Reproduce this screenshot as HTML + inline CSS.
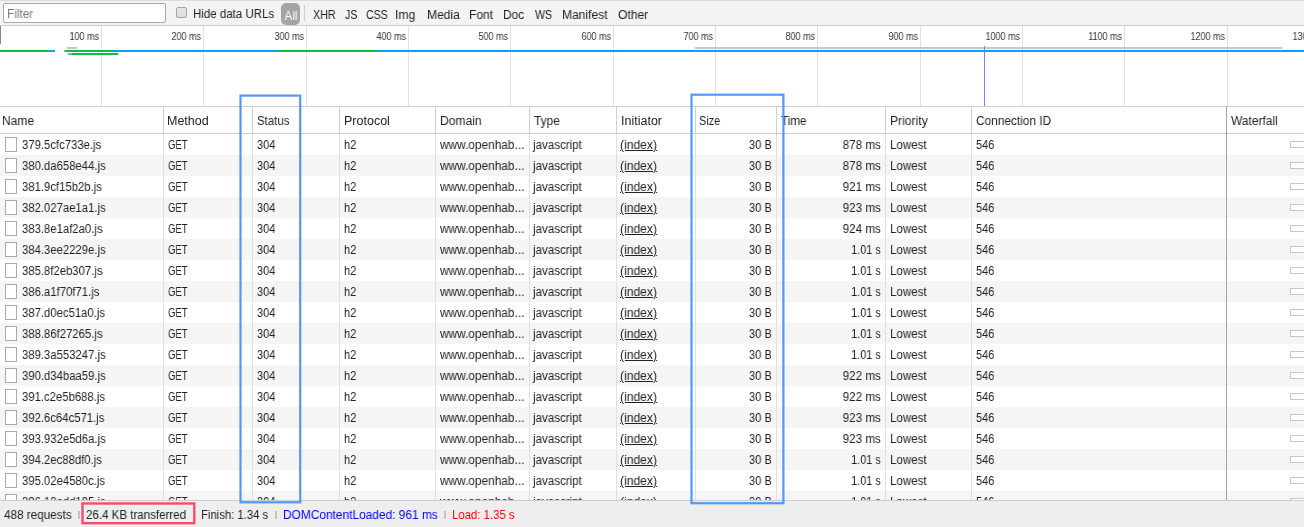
<!DOCTYPE html>
<html><head><meta charset="utf-8"><style>
*{box-sizing:border-box}
html,body{margin:0;padding:0}
body{width:1304px;height:527px;overflow:hidden;position:relative;background:#fff;font-family:"Liberation Sans", sans-serif;font-size:12.5px;color:#222}
.a{position:absolute;white-space:nowrap}
.t{position:absolute;white-space:nowrap;line-height:13px;will-change:transform;transform:scaleX(0.9);transform-origin:0 50%}
.t.r{text-align:right;transform-origin:100% 50%}
.t.c{text-align:center;transform-origin:50% 50%}
.vl{position:absolute;width:1px}
.hl{position:absolute;height:1px}
</style></head><body>

<div class="a" style="left:0;top:0;width:1304px;height:25px;background:#f3f3f3;border-top:1px solid #dcdcdc"></div>
<div class="hl" style="left:0;top:25px;width:1304px;background:#cdcdcd"></div>
<div class="a" style="left:3px;top:3px;width:163px;height:20px;background:#fff;border:1px solid #a9a9a9;border-radius:2px"></div>
<div class="t" style="left:6.7px;top:8px;color:#777;transform:scaleX(0.941)">Filter</div>
<div class="a" style="left:176px;top:7px;width:11px;height:11px;background:linear-gradient(#e6e6e6,#dcdcdc);border:1px solid #a4a4a4;border-radius:2px"></div>
<div class="t" style="left:193.1px;top:8px;color:#222;transform:scaleX(0.92)">Hide data URLs</div>
<div class="a" style="left:281px;top:3px;width:19px;height:22px;background:#a5a5a5;border-radius:5px"></div>
<div class="t c" style="left:280.5px;top:9px;color:#fff;width:20px;font-size:13px">All</div>
<div class="vl" style="left:304px;top:5px;height:16px;background:#d0d0d0"></div>
<div class="t" style="left:312.6px;top:9px;color:#222;transform:scaleX(0.862)">XHR</div>
<div class="t" style="left:345.2px;top:9px;color:#222;transform:scaleX(0.85)">JS</div>
<div class="t" style="left:366.0px;top:9px;color:#222;transform:scaleX(0.85)">CSS</div>
<div class="t" style="left:395.3px;top:9px;color:#222;transform:scaleX(0.97)">Img</div>
<div class="t" style="left:426.6px;top:9px;color:#222;transform:scaleX(0.967)">Media</div>
<div class="t" style="left:469.2px;top:9px;color:#222;transform:scaleX(0.963)">Font</div>
<div class="t" style="left:503.2px;top:9px;color:#222;transform:scaleX(0.948)">Doc</div>
<div class="t" style="left:534.8px;top:9px;color:#222;transform:scaleX(0.85)">WS</div>
<div class="t" style="left:561.9px;top:9px;color:#222;transform:scaleX(0.965)">Manifest</div>
<div class="t" style="left:618.0px;top:9px;color:#222;transform:scaleX(0.968)">Other</div>
<div class="vl" style="left:101px;top:26px;height:80px;background:#e2e2e2"></div>
<div class="t r" style="left:42px;top:30px;width:57px;font-size:10px;color:#333;transform:scaleX(0.9);transform-origin:right center">100 ms</div>
<div class="vl" style="left:203px;top:26px;height:80px;background:#e2e2e2"></div>
<div class="t r" style="left:144px;top:30px;width:57px;font-size:10px;color:#333;transform:scaleX(0.9);transform-origin:right center">200 ms</div>
<div class="vl" style="left:306px;top:26px;height:80px;background:#e2e2e2"></div>
<div class="t r" style="left:247px;top:30px;width:57px;font-size:10px;color:#333;transform:scaleX(0.9);transform-origin:right center">300 ms</div>
<div class="vl" style="left:408px;top:26px;height:80px;background:#e2e2e2"></div>
<div class="t r" style="left:349px;top:30px;width:57px;font-size:10px;color:#333;transform:scaleX(0.9);transform-origin:right center">400 ms</div>
<div class="vl" style="left:510px;top:26px;height:80px;background:#e2e2e2"></div>
<div class="t r" style="left:451px;top:30px;width:57px;font-size:10px;color:#333;transform:scaleX(0.9);transform-origin:right center">500 ms</div>
<div class="vl" style="left:613px;top:26px;height:80px;background:#e2e2e2"></div>
<div class="t r" style="left:554px;top:30px;width:57px;font-size:10px;color:#333;transform:scaleX(0.9);transform-origin:right center">600 ms</div>
<div class="vl" style="left:715px;top:26px;height:80px;background:#e2e2e2"></div>
<div class="t r" style="left:656px;top:30px;width:57px;font-size:10px;color:#333;transform:scaleX(0.9);transform-origin:right center">700 ms</div>
<div class="vl" style="left:817px;top:26px;height:80px;background:#e2e2e2"></div>
<div class="t r" style="left:758px;top:30px;width:57px;font-size:10px;color:#333;transform:scaleX(0.9);transform-origin:right center">800 ms</div>
<div class="vl" style="left:920px;top:26px;height:80px;background:#e2e2e2"></div>
<div class="t r" style="left:861px;top:30px;width:57px;font-size:10px;color:#333;transform:scaleX(0.9);transform-origin:right center">900 ms</div>
<div class="vl" style="left:1022px;top:26px;height:80px;background:#e2e2e2"></div>
<div class="t r" style="left:963px;top:30px;width:57px;font-size:10px;color:#333;transform:scaleX(0.9);transform-origin:right center">1000 ms</div>
<div class="vl" style="left:1124px;top:26px;height:80px;background:#e2e2e2"></div>
<div class="t r" style="left:1065px;top:30px;width:57px;font-size:10px;color:#333;transform:scaleX(0.9);transform-origin:right center">1100 ms</div>
<div class="vl" style="left:1227px;top:26px;height:80px;background:#e2e2e2"></div>
<div class="t r" style="left:1168px;top:30px;width:57px;font-size:10px;color:#333;transform:scaleX(0.9);transform-origin:right center">1200 ms</div>
<div class="vl" style="left:1329px;top:26px;height:80px;background:#e2e2e2"></div>
<div class="t r" style="left:1270px;top:30px;width:57px;font-size:10px;color:#333;transform:scaleX(0.9);transform-origin:right center">1300 ms</div>
<div class="vl" style="left:0;top:26px;height:18px;width:1px;background:#888"></div>
<div class="a" style="left:0px;top:50px;width:48px;height:2px;background:#00c244"></div>
<div class="a" style="left:48px;top:50px;width:7px;height:2px;background:#00a3f5"></div>
<div class="a" style="left:64px;top:50px;width:2px;height:2px;background:#a0a0a0"></div>
<div class="a" style="left:66px;top:50px;width:46px;height:2px;background:#00c244"></div>
<div class="a" style="left:112px;top:50px;width:4px;height:2px;background:#00a3f5"></div>
<div class="a" style="left:116px;top:50px;width:2px;height:2px;background:#00c244"></div>
<div class="a" style="left:118px;top:50px;width:160px;height:2px;background:#00a3f5"></div>
<div class="a" style="left:278px;top:50px;width:100px;height:2px;background:#00c244"></div>
<div class="a" style="left:378px;top:50px;width:926px;height:2px;background:#00a3f5"></div>
<div class="a" style="left:67px;top:47px;width:10px;height:2px;background:#c8c8c8"></div>
<div class="a" style="left:695px;top:47px;width:587px;height:2px;background:#c8c8c8"></div>
<div class="a" style="left:68px;top:53px;width:4px;height:2px;background:#a0a0a0"></div>
<div class="a" style="left:72px;top:53px;width:45px;height:2px;background:#00c244"></div>
<div class="a" style="left:117px;top:53px;width:1px;height:2px;background:#00a3f5"></div>
<div class="vl" style="left:984px;top:46px;height:60px;background:#7d7dff"></div>
<div class="hl" style="left:0;top:106px;width:1304px;background:#cdcdcd"></div>
<div class="hl" style="left:0;top:133px;width:1304px;background:#cdcdcd"></div>
<div class="t" style="left:2.3px;top:115px;transform:scaleX(0.959)">Name</div>
<div class="t" style="left:167.4px;top:115px;transform:scaleX(1.0)">Method</div>
<div class="t" style="left:256.5px;top:115px;transform:scaleX(0.915)">Status</div>
<div class="t" style="left:343.6px;top:115px;transform:scaleX(0.99)">Protocol</div>
<div class="t" style="left:439.5px;top:115px;transform:scaleX(0.967)">Domain</div>
<div class="t" style="left:533.9px;top:115px;transform:scaleX(0.95)">Type</div>
<div class="t" style="left:620.5px;top:115px;transform:scaleX(1.0)">Initiator</div>
<div class="t" style="left:699.3px;top:115px;transform:scaleX(0.878)">Size</div>
<div class="t" style="left:781.0px;top:115px;transform:scaleX(0.937)">Time</div>
<div class="t" style="left:889.6px;top:115px;transform:scaleX(0.968)">Priority</div>
<div class="t" style="left:976.4px;top:115px;transform:scaleX(0.949)">Connection ID</div>
<div class="t" style="left:1231.3px;top:115px;transform:scaleX(0.96)">Waterfall</div>
<div class="a" style="left:0;top:134px;width:1304px;height:21px;background:#fff"></div>
<div class="a" style="left:0;top:155px;width:1304px;height:21px;background:#f5f5f5"></div>
<div class="a" style="left:0;top:176px;width:1304px;height:21px;background:#fff"></div>
<div class="a" style="left:0;top:197px;width:1304px;height:21px;background:#f5f5f5"></div>
<div class="a" style="left:0;top:218px;width:1304px;height:21px;background:#fff"></div>
<div class="a" style="left:0;top:239px;width:1304px;height:21px;background:#f5f5f5"></div>
<div class="a" style="left:0;top:260px;width:1304px;height:21px;background:#fff"></div>
<div class="a" style="left:0;top:281px;width:1304px;height:21px;background:#f5f5f5"></div>
<div class="a" style="left:0;top:302px;width:1304px;height:21px;background:#fff"></div>
<div class="a" style="left:0;top:323px;width:1304px;height:21px;background:#f5f5f5"></div>
<div class="a" style="left:0;top:344px;width:1304px;height:21px;background:#fff"></div>
<div class="a" style="left:0;top:365px;width:1304px;height:21px;background:#f5f5f5"></div>
<div class="a" style="left:0;top:386px;width:1304px;height:21px;background:#fff"></div>
<div class="a" style="left:0;top:407px;width:1304px;height:21px;background:#f5f5f5"></div>
<div class="a" style="left:0;top:428px;width:1304px;height:21px;background:#fff"></div>
<div class="a" style="left:0;top:449px;width:1304px;height:21px;background:#f5f5f5"></div>
<div class="a" style="left:0;top:470px;width:1304px;height:21px;background:#fff"></div>
<div class="a" style="left:0;top:491px;width:1304px;height:21px;background:#f5f5f5"></div>
<div class="vl" style="left:163px;top:107px;height:26px;background:#d0d0d0"></div>
<div class="vl" style="left:163px;top:134px;height:366px;background:#e1e1e1"></div>
<div class="vl" style="left:252px;top:107px;height:26px;background:#d0d0d0"></div>
<div class="vl" style="left:252px;top:134px;height:366px;background:#e1e1e1"></div>
<div class="vl" style="left:339px;top:107px;height:26px;background:#d0d0d0"></div>
<div class="vl" style="left:339px;top:134px;height:366px;background:#e1e1e1"></div>
<div class="vl" style="left:435px;top:107px;height:26px;background:#d0d0d0"></div>
<div class="vl" style="left:435px;top:134px;height:366px;background:#e1e1e1"></div>
<div class="vl" style="left:529px;top:107px;height:26px;background:#d0d0d0"></div>
<div class="vl" style="left:529px;top:134px;height:366px;background:#e1e1e1"></div>
<div class="vl" style="left:616px;top:107px;height:26px;background:#d0d0d0"></div>
<div class="vl" style="left:616px;top:134px;height:366px;background:#e1e1e1"></div>
<div class="vl" style="left:695px;top:107px;height:26px;background:#d0d0d0"></div>
<div class="vl" style="left:695px;top:134px;height:366px;background:#e1e1e1"></div>
<div class="vl" style="left:776px;top:107px;height:26px;background:#d0d0d0"></div>
<div class="vl" style="left:776px;top:134px;height:366px;background:#e1e1e1"></div>
<div class="vl" style="left:885px;top:107px;height:26px;background:#d0d0d0"></div>
<div class="vl" style="left:885px;top:134px;height:366px;background:#e1e1e1"></div>
<div class="vl" style="left:971px;top:107px;height:26px;background:#d0d0d0"></div>
<div class="vl" style="left:971px;top:134px;height:366px;background:#e1e1e1"></div>
<div class="vl" style="left:1226px;top:107px;height:393px;background:#a3a3a3"></div>
<div class="a" style="left:5px;top:137px;width:12px;height:15px;border:1px solid #aaaaaa;background:#fff"></div>
<div class="t" style="left:22.3px;top:139px;transform:scaleX(0.905)">379.5cfc733e.js</div>
<div class="t" style="left:168.2px;top:139px;transform:scaleX(0.76)">GET</div>
<div class="t" style="left:257.2px;top:139px;transform:scaleX(0.876)">304</div>
<div class="t" style="left:343.9px;top:139px;transform:scaleX(0.885)">h2</div>
<div class="t" style="left:440.3px;top:139px;transform:scaleX(0.949)">www.openhab...</div>
<div class="t" style="left:533.3px;top:139px;transform:scaleX(0.926)">javascript</div>
<div class="t" style="left:620.1px;top:139px;text-decoration:underline;transform:scaleX(0.968)">(index)</div>
<div class="t r" style="left:700px;top:139px;width:71.8px;transform:scaleX(0.885)">30 B</div>
<div class="t r" style="left:790px;top:139px;width:90.8px;transform:scaleX(0.93)">878 ms</div>
<div class="t" style="left:889.7px;top:139px;transform:scaleX(0.923)">Lowest</div>
<div class="t" style="left:976.3px;top:139px;transform:scaleX(0.876)">546</div>
<div class="a" style="left:1290px;top:141px;width:20px;height:7px;border:1px solid #c8c8c8;background:#fff"></div>
<div class="a" style="left:5px;top:158px;width:12px;height:15px;border:1px solid #aaaaaa;background:#fff"></div>
<div class="t" style="left:22.3px;top:160px;transform:scaleX(0.905)">380.da658e44.js</div>
<div class="t" style="left:168.2px;top:160px;transform:scaleX(0.76)">GET</div>
<div class="t" style="left:257.2px;top:160px;transform:scaleX(0.876)">304</div>
<div class="t" style="left:343.9px;top:160px;transform:scaleX(0.885)">h2</div>
<div class="t" style="left:440.3px;top:160px;transform:scaleX(0.949)">www.openhab...</div>
<div class="t" style="left:533.3px;top:160px;transform:scaleX(0.926)">javascript</div>
<div class="t" style="left:620.1px;top:160px;text-decoration:underline;transform:scaleX(0.968)">(index)</div>
<div class="t r" style="left:700px;top:160px;width:71.8px;transform:scaleX(0.885)">30 B</div>
<div class="t r" style="left:790px;top:160px;width:90.8px;transform:scaleX(0.93)">878 ms</div>
<div class="t" style="left:889.7px;top:160px;transform:scaleX(0.923)">Lowest</div>
<div class="t" style="left:976.3px;top:160px;transform:scaleX(0.876)">546</div>
<div class="a" style="left:1290px;top:162px;width:20px;height:7px;border:1px solid #c8c8c8;background:#fff"></div>
<div class="a" style="left:5px;top:179px;width:12px;height:15px;border:1px solid #aaaaaa;background:#fff"></div>
<div class="t" style="left:22.3px;top:181px;transform:scaleX(0.905)">381.9cf15b2b.js</div>
<div class="t" style="left:168.2px;top:181px;transform:scaleX(0.76)">GET</div>
<div class="t" style="left:257.2px;top:181px;transform:scaleX(0.876)">304</div>
<div class="t" style="left:343.9px;top:181px;transform:scaleX(0.885)">h2</div>
<div class="t" style="left:440.3px;top:181px;transform:scaleX(0.949)">www.openhab...</div>
<div class="t" style="left:533.3px;top:181px;transform:scaleX(0.926)">javascript</div>
<div class="t" style="left:620.1px;top:181px;text-decoration:underline;transform:scaleX(0.968)">(index)</div>
<div class="t r" style="left:700px;top:181px;width:71.8px;transform:scaleX(0.885)">30 B</div>
<div class="t r" style="left:790px;top:181px;width:90.8px;transform:scaleX(0.93)">921 ms</div>
<div class="t" style="left:889.7px;top:181px;transform:scaleX(0.923)">Lowest</div>
<div class="t" style="left:976.3px;top:181px;transform:scaleX(0.876)">546</div>
<div class="a" style="left:1290px;top:183px;width:20px;height:7px;border:1px solid #c8c8c8;background:#fff"></div>
<div class="a" style="left:5px;top:200px;width:12px;height:15px;border:1px solid #aaaaaa;background:#fff"></div>
<div class="t" style="left:22.3px;top:202px;transform:scaleX(0.905)">382.027ae1a1.js</div>
<div class="t" style="left:168.2px;top:202px;transform:scaleX(0.76)">GET</div>
<div class="t" style="left:257.2px;top:202px;transform:scaleX(0.876)">304</div>
<div class="t" style="left:343.9px;top:202px;transform:scaleX(0.885)">h2</div>
<div class="t" style="left:440.3px;top:202px;transform:scaleX(0.949)">www.openhab...</div>
<div class="t" style="left:533.3px;top:202px;transform:scaleX(0.926)">javascript</div>
<div class="t" style="left:620.1px;top:202px;text-decoration:underline;transform:scaleX(0.968)">(index)</div>
<div class="t r" style="left:700px;top:202px;width:71.8px;transform:scaleX(0.885)">30 B</div>
<div class="t r" style="left:790px;top:202px;width:90.8px;transform:scaleX(0.93)">923 ms</div>
<div class="t" style="left:889.7px;top:202px;transform:scaleX(0.923)">Lowest</div>
<div class="t" style="left:976.3px;top:202px;transform:scaleX(0.876)">546</div>
<div class="a" style="left:1290px;top:204px;width:20px;height:7px;border:1px solid #c8c8c8;background:#fff"></div>
<div class="a" style="left:5px;top:221px;width:12px;height:15px;border:1px solid #aaaaaa;background:#fff"></div>
<div class="t" style="left:22.3px;top:223px;transform:scaleX(0.905)">383.8e1af2a0.js</div>
<div class="t" style="left:168.2px;top:223px;transform:scaleX(0.76)">GET</div>
<div class="t" style="left:257.2px;top:223px;transform:scaleX(0.876)">304</div>
<div class="t" style="left:343.9px;top:223px;transform:scaleX(0.885)">h2</div>
<div class="t" style="left:440.3px;top:223px;transform:scaleX(0.949)">www.openhab...</div>
<div class="t" style="left:533.3px;top:223px;transform:scaleX(0.926)">javascript</div>
<div class="t" style="left:620.1px;top:223px;text-decoration:underline;transform:scaleX(0.968)">(index)</div>
<div class="t r" style="left:700px;top:223px;width:71.8px;transform:scaleX(0.885)">30 B</div>
<div class="t r" style="left:790px;top:223px;width:90.8px;transform:scaleX(0.93)">924 ms</div>
<div class="t" style="left:889.7px;top:223px;transform:scaleX(0.923)">Lowest</div>
<div class="t" style="left:976.3px;top:223px;transform:scaleX(0.876)">546</div>
<div class="a" style="left:1290px;top:225px;width:20px;height:7px;border:1px solid #c8c8c8;background:#fff"></div>
<div class="a" style="left:5px;top:242px;width:12px;height:15px;border:1px solid #aaaaaa;background:#fff"></div>
<div class="t" style="left:22.3px;top:244px;transform:scaleX(0.905)">384.3ee2229e.js</div>
<div class="t" style="left:168.2px;top:244px;transform:scaleX(0.76)">GET</div>
<div class="t" style="left:257.2px;top:244px;transform:scaleX(0.876)">304</div>
<div class="t" style="left:343.9px;top:244px;transform:scaleX(0.885)">h2</div>
<div class="t" style="left:440.3px;top:244px;transform:scaleX(0.949)">www.openhab...</div>
<div class="t" style="left:533.3px;top:244px;transform:scaleX(0.926)">javascript</div>
<div class="t" style="left:620.1px;top:244px;text-decoration:underline;transform:scaleX(0.968)">(index)</div>
<div class="t r" style="left:700px;top:244px;width:71.8px;transform:scaleX(0.885)">30 B</div>
<div class="t r" style="left:790px;top:244px;width:90.8px;transform:scaleX(0.87)">1.01 s</div>
<div class="t" style="left:889.7px;top:244px;transform:scaleX(0.923)">Lowest</div>
<div class="t" style="left:976.3px;top:244px;transform:scaleX(0.876)">546</div>
<div class="a" style="left:1290px;top:246px;width:20px;height:7px;border:1px solid #c8c8c8;background:#fff"></div>
<div class="a" style="left:5px;top:263px;width:12px;height:15px;border:1px solid #aaaaaa;background:#fff"></div>
<div class="t" style="left:22.3px;top:265px;transform:scaleX(0.905)">385.8f2eb307.js</div>
<div class="t" style="left:168.2px;top:265px;transform:scaleX(0.76)">GET</div>
<div class="t" style="left:257.2px;top:265px;transform:scaleX(0.876)">304</div>
<div class="t" style="left:343.9px;top:265px;transform:scaleX(0.885)">h2</div>
<div class="t" style="left:440.3px;top:265px;transform:scaleX(0.949)">www.openhab...</div>
<div class="t" style="left:533.3px;top:265px;transform:scaleX(0.926)">javascript</div>
<div class="t" style="left:620.1px;top:265px;text-decoration:underline;transform:scaleX(0.968)">(index)</div>
<div class="t r" style="left:700px;top:265px;width:71.8px;transform:scaleX(0.885)">30 B</div>
<div class="t r" style="left:790px;top:265px;width:90.8px;transform:scaleX(0.87)">1.01 s</div>
<div class="t" style="left:889.7px;top:265px;transform:scaleX(0.923)">Lowest</div>
<div class="t" style="left:976.3px;top:265px;transform:scaleX(0.876)">546</div>
<div class="a" style="left:1290px;top:267px;width:20px;height:7px;border:1px solid #c8c8c8;background:#fff"></div>
<div class="a" style="left:5px;top:284px;width:12px;height:15px;border:1px solid #aaaaaa;background:#fff"></div>
<div class="t" style="left:22.3px;top:286px;transform:scaleX(0.905)">386.a1f70f71.js</div>
<div class="t" style="left:168.2px;top:286px;transform:scaleX(0.76)">GET</div>
<div class="t" style="left:257.2px;top:286px;transform:scaleX(0.876)">304</div>
<div class="t" style="left:343.9px;top:286px;transform:scaleX(0.885)">h2</div>
<div class="t" style="left:440.3px;top:286px;transform:scaleX(0.949)">www.openhab...</div>
<div class="t" style="left:533.3px;top:286px;transform:scaleX(0.926)">javascript</div>
<div class="t" style="left:620.1px;top:286px;text-decoration:underline;transform:scaleX(0.968)">(index)</div>
<div class="t r" style="left:700px;top:286px;width:71.8px;transform:scaleX(0.885)">30 B</div>
<div class="t r" style="left:790px;top:286px;width:90.8px;transform:scaleX(0.87)">1.01 s</div>
<div class="t" style="left:889.7px;top:286px;transform:scaleX(0.923)">Lowest</div>
<div class="t" style="left:976.3px;top:286px;transform:scaleX(0.876)">546</div>
<div class="a" style="left:1290px;top:288px;width:20px;height:7px;border:1px solid #c8c8c8;background:#fff"></div>
<div class="a" style="left:5px;top:305px;width:12px;height:15px;border:1px solid #aaaaaa;background:#fff"></div>
<div class="t" style="left:22.3px;top:307px;transform:scaleX(0.905)">387.d0ec51a0.js</div>
<div class="t" style="left:168.2px;top:307px;transform:scaleX(0.76)">GET</div>
<div class="t" style="left:257.2px;top:307px;transform:scaleX(0.876)">304</div>
<div class="t" style="left:343.9px;top:307px;transform:scaleX(0.885)">h2</div>
<div class="t" style="left:440.3px;top:307px;transform:scaleX(0.949)">www.openhab...</div>
<div class="t" style="left:533.3px;top:307px;transform:scaleX(0.926)">javascript</div>
<div class="t" style="left:620.1px;top:307px;text-decoration:underline;transform:scaleX(0.968)">(index)</div>
<div class="t r" style="left:700px;top:307px;width:71.8px;transform:scaleX(0.885)">30 B</div>
<div class="t r" style="left:790px;top:307px;width:90.8px;transform:scaleX(0.87)">1.01 s</div>
<div class="t" style="left:889.7px;top:307px;transform:scaleX(0.923)">Lowest</div>
<div class="t" style="left:976.3px;top:307px;transform:scaleX(0.876)">546</div>
<div class="a" style="left:1290px;top:309px;width:20px;height:7px;border:1px solid #c8c8c8;background:#fff"></div>
<div class="a" style="left:5px;top:326px;width:12px;height:15px;border:1px solid #aaaaaa;background:#fff"></div>
<div class="t" style="left:22.3px;top:328px;transform:scaleX(0.905)">388.86f27265.js</div>
<div class="t" style="left:168.2px;top:328px;transform:scaleX(0.76)">GET</div>
<div class="t" style="left:257.2px;top:328px;transform:scaleX(0.876)">304</div>
<div class="t" style="left:343.9px;top:328px;transform:scaleX(0.885)">h2</div>
<div class="t" style="left:440.3px;top:328px;transform:scaleX(0.949)">www.openhab...</div>
<div class="t" style="left:533.3px;top:328px;transform:scaleX(0.926)">javascript</div>
<div class="t" style="left:620.1px;top:328px;text-decoration:underline;transform:scaleX(0.968)">(index)</div>
<div class="t r" style="left:700px;top:328px;width:71.8px;transform:scaleX(0.885)">30 B</div>
<div class="t r" style="left:790px;top:328px;width:90.8px;transform:scaleX(0.87)">1.01 s</div>
<div class="t" style="left:889.7px;top:328px;transform:scaleX(0.923)">Lowest</div>
<div class="t" style="left:976.3px;top:328px;transform:scaleX(0.876)">546</div>
<div class="a" style="left:1290px;top:330px;width:20px;height:7px;border:1px solid #c8c8c8;background:#fff"></div>
<div class="a" style="left:5px;top:347px;width:12px;height:15px;border:1px solid #aaaaaa;background:#fff"></div>
<div class="t" style="left:22.3px;top:349px;transform:scaleX(0.905)">389.3a553247.js</div>
<div class="t" style="left:168.2px;top:349px;transform:scaleX(0.76)">GET</div>
<div class="t" style="left:257.2px;top:349px;transform:scaleX(0.876)">304</div>
<div class="t" style="left:343.9px;top:349px;transform:scaleX(0.885)">h2</div>
<div class="t" style="left:440.3px;top:349px;transform:scaleX(0.949)">www.openhab...</div>
<div class="t" style="left:533.3px;top:349px;transform:scaleX(0.926)">javascript</div>
<div class="t" style="left:620.1px;top:349px;text-decoration:underline;transform:scaleX(0.968)">(index)</div>
<div class="t r" style="left:700px;top:349px;width:71.8px;transform:scaleX(0.885)">30 B</div>
<div class="t r" style="left:790px;top:349px;width:90.8px;transform:scaleX(0.87)">1.01 s</div>
<div class="t" style="left:889.7px;top:349px;transform:scaleX(0.923)">Lowest</div>
<div class="t" style="left:976.3px;top:349px;transform:scaleX(0.876)">546</div>
<div class="a" style="left:1290px;top:351px;width:20px;height:7px;border:1px solid #c8c8c8;background:#fff"></div>
<div class="a" style="left:5px;top:368px;width:12px;height:15px;border:1px solid #aaaaaa;background:#fff"></div>
<div class="t" style="left:22.3px;top:370px;transform:scaleX(0.905)">390.d34baa59.js</div>
<div class="t" style="left:168.2px;top:370px;transform:scaleX(0.76)">GET</div>
<div class="t" style="left:257.2px;top:370px;transform:scaleX(0.876)">304</div>
<div class="t" style="left:343.9px;top:370px;transform:scaleX(0.885)">h2</div>
<div class="t" style="left:440.3px;top:370px;transform:scaleX(0.949)">www.openhab...</div>
<div class="t" style="left:533.3px;top:370px;transform:scaleX(0.926)">javascript</div>
<div class="t" style="left:620.1px;top:370px;text-decoration:underline;transform:scaleX(0.968)">(index)</div>
<div class="t r" style="left:700px;top:370px;width:71.8px;transform:scaleX(0.885)">30 B</div>
<div class="t r" style="left:790px;top:370px;width:90.8px;transform:scaleX(0.93)">922 ms</div>
<div class="t" style="left:889.7px;top:370px;transform:scaleX(0.923)">Lowest</div>
<div class="t" style="left:976.3px;top:370px;transform:scaleX(0.876)">546</div>
<div class="a" style="left:1290px;top:372px;width:20px;height:7px;border:1px solid #c8c8c8;background:#fff"></div>
<div class="a" style="left:5px;top:389px;width:12px;height:15px;border:1px solid #aaaaaa;background:#fff"></div>
<div class="t" style="left:22.3px;top:391px;transform:scaleX(0.905)">391.c2e5b688.js</div>
<div class="t" style="left:168.2px;top:391px;transform:scaleX(0.76)">GET</div>
<div class="t" style="left:257.2px;top:391px;transform:scaleX(0.876)">304</div>
<div class="t" style="left:343.9px;top:391px;transform:scaleX(0.885)">h2</div>
<div class="t" style="left:440.3px;top:391px;transform:scaleX(0.949)">www.openhab...</div>
<div class="t" style="left:533.3px;top:391px;transform:scaleX(0.926)">javascript</div>
<div class="t" style="left:620.1px;top:391px;text-decoration:underline;transform:scaleX(0.968)">(index)</div>
<div class="t r" style="left:700px;top:391px;width:71.8px;transform:scaleX(0.885)">30 B</div>
<div class="t r" style="left:790px;top:391px;width:90.8px;transform:scaleX(0.93)">922 ms</div>
<div class="t" style="left:889.7px;top:391px;transform:scaleX(0.923)">Lowest</div>
<div class="t" style="left:976.3px;top:391px;transform:scaleX(0.876)">546</div>
<div class="a" style="left:1290px;top:393px;width:20px;height:7px;border:1px solid #c8c8c8;background:#fff"></div>
<div class="a" style="left:5px;top:410px;width:12px;height:15px;border:1px solid #aaaaaa;background:#fff"></div>
<div class="t" style="left:22.3px;top:412px;transform:scaleX(0.905)">392.6c64c571.js</div>
<div class="t" style="left:168.2px;top:412px;transform:scaleX(0.76)">GET</div>
<div class="t" style="left:257.2px;top:412px;transform:scaleX(0.876)">304</div>
<div class="t" style="left:343.9px;top:412px;transform:scaleX(0.885)">h2</div>
<div class="t" style="left:440.3px;top:412px;transform:scaleX(0.949)">www.openhab...</div>
<div class="t" style="left:533.3px;top:412px;transform:scaleX(0.926)">javascript</div>
<div class="t" style="left:620.1px;top:412px;text-decoration:underline;transform:scaleX(0.968)">(index)</div>
<div class="t r" style="left:700px;top:412px;width:71.8px;transform:scaleX(0.885)">30 B</div>
<div class="t r" style="left:790px;top:412px;width:90.8px;transform:scaleX(0.93)">923 ms</div>
<div class="t" style="left:889.7px;top:412px;transform:scaleX(0.923)">Lowest</div>
<div class="t" style="left:976.3px;top:412px;transform:scaleX(0.876)">546</div>
<div class="a" style="left:1290px;top:414px;width:20px;height:7px;border:1px solid #c8c8c8;background:#fff"></div>
<div class="a" style="left:5px;top:431px;width:12px;height:15px;border:1px solid #aaaaaa;background:#fff"></div>
<div class="t" style="left:22.3px;top:433px;transform:scaleX(0.905)">393.932e5d6a.js</div>
<div class="t" style="left:168.2px;top:433px;transform:scaleX(0.76)">GET</div>
<div class="t" style="left:257.2px;top:433px;transform:scaleX(0.876)">304</div>
<div class="t" style="left:343.9px;top:433px;transform:scaleX(0.885)">h2</div>
<div class="t" style="left:440.3px;top:433px;transform:scaleX(0.949)">www.openhab...</div>
<div class="t" style="left:533.3px;top:433px;transform:scaleX(0.926)">javascript</div>
<div class="t" style="left:620.1px;top:433px;text-decoration:underline;transform:scaleX(0.968)">(index)</div>
<div class="t r" style="left:700px;top:433px;width:71.8px;transform:scaleX(0.885)">30 B</div>
<div class="t r" style="left:790px;top:433px;width:90.8px;transform:scaleX(0.93)">923 ms</div>
<div class="t" style="left:889.7px;top:433px;transform:scaleX(0.923)">Lowest</div>
<div class="t" style="left:976.3px;top:433px;transform:scaleX(0.876)">546</div>
<div class="a" style="left:1290px;top:435px;width:20px;height:7px;border:1px solid #c8c8c8;background:#fff"></div>
<div class="a" style="left:5px;top:452px;width:12px;height:15px;border:1px solid #aaaaaa;background:#fff"></div>
<div class="t" style="left:22.3px;top:454px;transform:scaleX(0.905)">394.2ec88df0.js</div>
<div class="t" style="left:168.2px;top:454px;transform:scaleX(0.76)">GET</div>
<div class="t" style="left:257.2px;top:454px;transform:scaleX(0.876)">304</div>
<div class="t" style="left:343.9px;top:454px;transform:scaleX(0.885)">h2</div>
<div class="t" style="left:440.3px;top:454px;transform:scaleX(0.949)">www.openhab...</div>
<div class="t" style="left:533.3px;top:454px;transform:scaleX(0.926)">javascript</div>
<div class="t" style="left:620.1px;top:454px;text-decoration:underline;transform:scaleX(0.968)">(index)</div>
<div class="t r" style="left:700px;top:454px;width:71.8px;transform:scaleX(0.885)">30 B</div>
<div class="t r" style="left:790px;top:454px;width:90.8px;transform:scaleX(0.87)">1.01 s</div>
<div class="t" style="left:889.7px;top:454px;transform:scaleX(0.923)">Lowest</div>
<div class="t" style="left:976.3px;top:454px;transform:scaleX(0.876)">546</div>
<div class="a" style="left:1290px;top:456px;width:20px;height:7px;border:1px solid #c8c8c8;background:#fff"></div>
<div class="a" style="left:5px;top:473px;width:12px;height:15px;border:1px solid #aaaaaa;background:#fff"></div>
<div class="t" style="left:22.3px;top:475px;transform:scaleX(0.905)">395.02e4580c.js</div>
<div class="t" style="left:168.2px;top:475px;transform:scaleX(0.76)">GET</div>
<div class="t" style="left:257.2px;top:475px;transform:scaleX(0.876)">304</div>
<div class="t" style="left:343.9px;top:475px;transform:scaleX(0.885)">h2</div>
<div class="t" style="left:440.3px;top:475px;transform:scaleX(0.949)">www.openhab...</div>
<div class="t" style="left:533.3px;top:475px;transform:scaleX(0.926)">javascript</div>
<div class="t" style="left:620.1px;top:475px;text-decoration:underline;transform:scaleX(0.968)">(index)</div>
<div class="t r" style="left:700px;top:475px;width:71.8px;transform:scaleX(0.885)">30 B</div>
<div class="t r" style="left:790px;top:475px;width:90.8px;transform:scaleX(0.87)">1.01 s</div>
<div class="t" style="left:889.7px;top:475px;transform:scaleX(0.923)">Lowest</div>
<div class="t" style="left:976.3px;top:475px;transform:scaleX(0.876)">546</div>
<div class="a" style="left:1290px;top:477px;width:20px;height:7px;border:1px solid #c8c8c8;background:#fff"></div>
<div class="a" style="left:5px;top:494px;width:12px;height:15px;border:1px solid #aaaaaa;background:#fff"></div>
<div class="t" style="left:22.3px;top:496px;transform:scaleX(0.905)">396.13edd195.js</div>
<div class="t" style="left:168.2px;top:496px;transform:scaleX(0.76)">GET</div>
<div class="t" style="left:257.2px;top:496px;transform:scaleX(0.876)">304</div>
<div class="t" style="left:343.9px;top:496px;transform:scaleX(0.885)">h2</div>
<div class="t" style="left:440.3px;top:496px;transform:scaleX(0.949)">www.openhab...</div>
<div class="t" style="left:533.3px;top:496px;transform:scaleX(0.926)">javascript</div>
<div class="t" style="left:620.1px;top:496px;text-decoration:underline;transform:scaleX(0.968)">(index)</div>
<div class="t r" style="left:700px;top:496px;width:71.8px;transform:scaleX(0.885)">30 B</div>
<div class="t r" style="left:790px;top:496px;width:90.8px;transform:scaleX(0.87)">1.01 s</div>
<div class="t" style="left:889.7px;top:496px;transform:scaleX(0.923)">Lowest</div>
<div class="t" style="left:976.3px;top:496px;transform:scaleX(0.876)">546</div>
<div class="a" style="left:1290px;top:498px;width:20px;height:7px;border:1px solid #c8c8c8;background:#fff"></div>
<div class="a" style="left:0;top:500px;width:1304px;height:27px;background:#eeeeee;border-top:1px solid #cdcdcd"></div>
<div class="t" style="left:4px;top:509px;transform:scaleX(0.936)">488 requests</div>
<div class="a" style="left:78px;top:511px;width:2px;height:8px;background:#c4c4c4"></div>
<div class="t" style="left:86.3px;top:509px;transform:scaleX(0.923)">26.4 KB transferred</div>
<div class="t" style="left:201.4px;top:509px;transform:scaleX(0.903)">Finish: 1.34 s</div>
<div class="a" style="left:275px;top:511px;width:2px;height:8px;background:#c4c4c4"></div>
<div class="t" style="left:282.9px;top:509px;color:#0000ff;transform:scaleX(0.952)">DOMContentLoaded: 961 ms</div>
<div class="a" style="left:444px;top:511px;width:2px;height:8px;background:#c4c4c4"></div>
<div class="t" style="left:451.9px;top:509px;color:#ff0000;transform:scaleX(0.909)">Load: 1.35 s</div>
<svg class="a" style="left:0;top:0" width="1304" height="527" viewBox="0 0 1304 527"><rect x="240.5" y="95.6" width="59.7" height="406.7" fill="none" stroke="#5298fa" stroke-width="2.2"/><rect x="691.5" y="94.7" width="91.9" height="408.5" fill="none" stroke="#5298fa" stroke-width="2.2"/><rect x="82.5" y="503.5" width="111.8" height="19.7" fill="none" stroke="#fa4c6a" stroke-width="2.4"/></svg>
</body></html>
